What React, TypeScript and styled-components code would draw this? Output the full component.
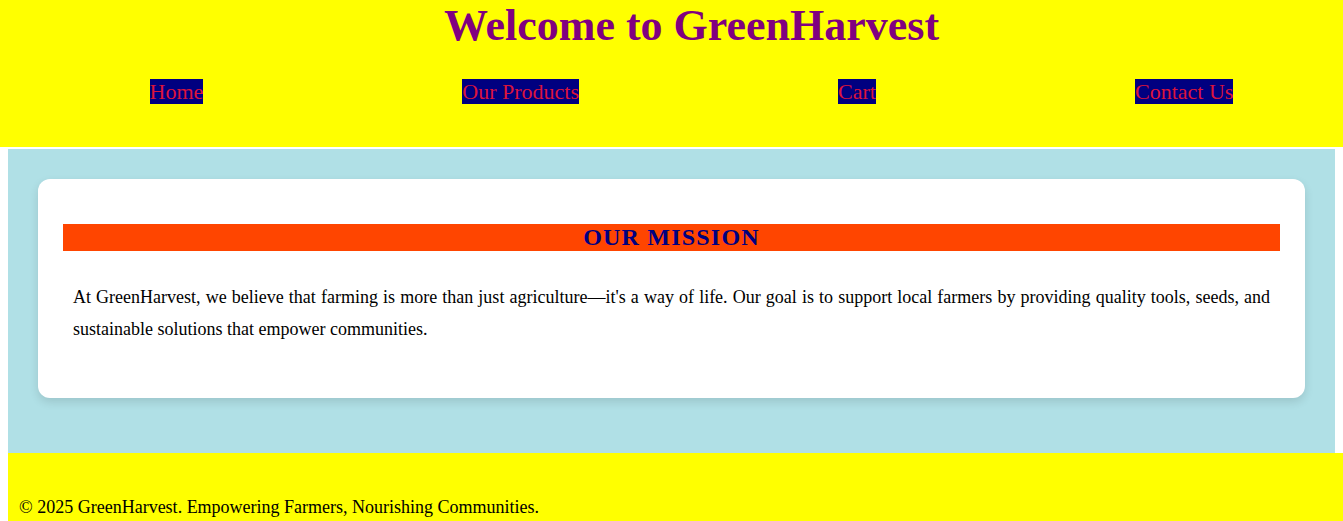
import React from "react";
import styled, { createGlobalStyle } from "styled-components";

const GlobalStyle = createGlobalStyle`
  html, body {
    margin: 0;
    padding: 0;
    overflow-x: hidden;
  }
  body {
    font-family: "Liberation Serif", "Times New Roman", serif;
    background: #ffffff;
    color: #000000;
  }
`;

const Header = styled.header`
  background: #ffff00;
  width: 100%;
  box-sizing: content-box;
  padding: 0 20px;
  height: 147px;
`;

const Title = styled.h1`
  margin: 0;
  text-align: center;
  font-size: 44px;
  font-weight: bold;
  color: #800080;
  line-height: 51px;
`;

const Nav = styled.nav`
  display: flex;
  justify-content: space-around;
  align-items: center;
  margin-top: 28px;
`;

const NavLink = styled.a`
  background: #000080;
  color: #dc143c;
  font-size: 22px;
  line-height: 25px;
  text-decoration: none;
`;

const Main = styled.main`
  margin: 2px 8px 0;
  background: #b0e0e6;
  padding: 30px 30px 30px;
`;

const Card = styled.section`
  background: #ffffff;
  border-radius: 12px;
  padding: 25px;
  margin-bottom: 25px;
  box-shadow: 0 4px 10px rgba(0, 0, 0, 0.12);
`;

const SectionTitle = styled.h2`
  margin: 20px 0;
  background: #ff4500;
  color: #000080;
  font-size: 24px;
  line-height: 27px;
  font-weight: bold;
  letter-spacing: 1.2px;
  text-align: center;
  text-transform: uppercase;
`;

const Text = styled.p`
  margin: 18px 0 17px;
  padding: 10px;
  font-size: 18px;
  line-height: 1.8;
  text-align: justify;
`;

const Footer = styled.footer`
  margin-left: 8px;
  width: 100vw;
  background: #ffff00;
  padding: 26px 11px 10px;
  box-sizing: border-box;
`;

const FooterText = styled.p`
  margin: 18px 0;
  font-size: 18px;
`;

export default function App() {
  return (
    <>
      <GlobalStyle />
      <Header>
        <Title>Welcome to GreenHarvest</Title>
        <Nav>
          <NavLink href="#">Home</NavLink>
          <NavLink href="#">Our Products</NavLink>
          <NavLink href="#">Cart</NavLink>
          <NavLink href="#">Contact Us</NavLink>
        </Nav>
      </Header>
      <Main>
        <Card>
          <SectionTitle>Our Mission</SectionTitle>
          <Text>
            At GreenHarvest, we believe that farming is more than just agriculture—it's a way of life. Our goal is to
            support local farmers by providing quality tools, seeds, and sustainable solutions that empower communities.
          </Text>
        </Card>
      </Main>
      <Footer>
        <FooterText>© 2025 GreenHarvest. Empowering Farmers, Nourishing Communities.</FooterText>
      </Footer>
    </>
  );
}
